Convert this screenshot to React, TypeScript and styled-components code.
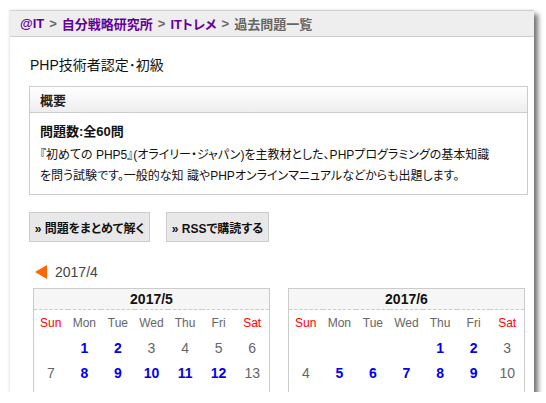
import styled, { createGlobalStyle } from "styled-components";

const Global = createGlobalStyle`
  html, body {
    margin: 0;
    padding: 0;
    background: #fff;
  }
  body {
    font-family: "Liberation Sans", "Noto Sans CJK JP", sans-serif;
    font-feature-settings: "palt";
    color: #222;
  }
`;

const Window = styled.div`
  margin: 10px 0 0 10px;
  width: 524px;
  height: 382px;
  background: #fff;
  overflow: hidden;
  box-shadow: 4px 4px 5px rgba(0, 0, 0, 0.55), -1px 0 2px rgba(0, 0, 0, 0.08);
`;

const Breadcrumb = styled.div`
  height: 25px;
  display: flex;
  align-items: center;
  gap: 5px;
  padding-left: 10px;
  background: #eeeeee;
  border-top: 1px solid #d0d0d0;
  border-bottom: 1px solid #cccccc;
  font-size: 13px;
  font-weight: bold;
  color: #666;
`;

const Crumb = styled.span<{ $link?: boolean }>`
  color: ${(p) => (p.$link ? "#660099" : "#666")};
`;

const Content = styled.div`
  padding: 18px 0 0 19px;
`;

const Title = styled.h1`
  margin: 0 0 11px 1px;
  font-size: 14px;
  font-weight: normal;
  line-height: 20px;
  color: #111;
`;

const Summary = styled.div`
  width: 497px;
  border: 1px solid #cccccc;
`;

const SummaryHead = styled.div`
  height: 25px;
  display: flex;
  align-items: center;
  padding-left: 10px;
  background: linear-gradient(#ffffff, #eeeeee);
  border-bottom: 1px solid #cccccc;
  font-size: 13px;
  font-weight: bold;
  color: #222;
`;

const SummaryBody = styled.div`
  padding: 9px 10px 7px 10px;
  font-size: 12px;
  line-height: 21px;
  color: #111;
  white-space: nowrap;
`;

const Count = styled.div`
  font-size: 13px;
  line-height: 20px;
  font-weight: bold;
  margin-bottom: 3px;
`;

const Buttons = styled.div`
  display: flex;
  gap: 16px;
  margin-top: 17px;
`;

const Button = styled.div<{ $w: number }>`
  width: ${(p) => p.$w}px;
  height: 28px;
  box-sizing: content-box;
  display: flex;
  align-items: center;
  justify-content: center;
  background: #e8e8e8;
  border: 1px solid #cccccc;
  font-size: 12px;
  font-weight: bold;
  color: #111;
  white-space: nowrap;
`;

const Prev = styled.div`
  display: flex;
  align-items: center;
  gap: 8px;
  margin: 21px 0 0 6px;
  height: 18px;
  font-size: 14px;
  color: #444;
`;

const Arrow = styled.span`
  width: 0;
  height: 0;
  border-top: 7px solid transparent;
  border-bottom: 7px solid transparent;
  border-right: 12px solid #ff6600;
`;

const Calendars = styled.div`
  display: flex;
  align-items: flex-start;
  gap: 18px;
  margin: 7px 0 0 4px;
`;

const CalBox = styled.div`
  width: 235px;
  height: 140px;
  border: 1px solid #cccccc;
`;

const Cal = styled.table`
  width: 100%;
  border-collapse: collapse;
  table-layout: fixed;
`;

const CalTitle = styled.th`
  height: 20px;
  padding: 0;
  background: #f6f6f6;
  border-bottom: 1px dashed #cccccc;
  font-size: 14px;
  font-weight: bold;
  color: #111;
`;

const DayName = styled.td<{ $weekend?: boolean }>`
  height: 25px;
  padding: 0;
  text-align: center;
  font-size: 12px;
  color: ${(p) => (p.$weekend ? "#ff0000" : "#666")};
`;

const DateCell = styled.td<{ $link?: boolean }>`
  height: 25px;
  padding: 0;
  text-align: center;
  font-size: 14px;
  font-weight: ${(p) => (p.$link ? "bold" : "normal")};
  color: ${(p) => (p.$link ? "#0000ee" : "#666")};
`;

const days = ["Sun", "Mon", "Tue", "Wed", "Thu", "Fri", "Sat"];

type Day = { n?: number; link?: boolean };

const Calendar = ({ title, weeks }: { title: string; weeks: Day[][] }) => (
  <CalBox>
    <Cal>
      <thead>
        <tr>
          <CalTitle colSpan={7}>{title}</CalTitle>
        </tr>
      </thead>
      <tbody>
        <tr>
          {days.map((d, i) => (
            <DayName key={d} $weekend={i === 0 || i === 6}>
              {d}
            </DayName>
          ))}
        </tr>
        {weeks.map((w, i) => (
          <tr key={i}>
            {w.map((d, j) => (
              <DateCell key={j} $link={d.link}>
                {d.n}
              </DateCell>
            ))}
          </tr>
        ))}
      </tbody>
    </Cal>
  </CalBox>
);

// only the weeks that show above the window's bottom edge
const build = (offset: number, count: number, links: number[], rows: number): Day[][] => {
  const cells: Day[] = [];
  for (let i = 0; i < offset; i++) cells.push({});
  for (let n = 1; n <= count; n++) cells.push({ n, link: links.includes(n) });
  while (cells.length % 7) cells.push({});
  const weeks: Day[][] = [];
  for (let i = 0; i < cells.length; i += 7) weeks.push(cells.slice(i, i + 7));
  return weeks.slice(0, rows);
};

const may = build(1, 31, [1, 2, 8, 9, 10, 11, 12], 2);
const june = build(4, 30, [1, 2, 5, 6, 7, 8, 9], 2);

export default function App() {
  return (
    <>
      <Global />
      <Window>
        <Breadcrumb>
          <Crumb $link>@IT</Crumb>
          <Crumb>&gt;</Crumb>
          <Crumb $link>自分戦略研究所</Crumb>
          <Crumb>&gt;</Crumb>
          <Crumb $link>ITトレメ</Crumb>
          <Crumb>&gt;</Crumb>
          <Crumb>過去問題一覧</Crumb>
        </Breadcrumb>
        <Content>
          <Title>PHP技術者認定･初級</Title>
          <Summary>
            <SummaryHead>概要</SummaryHead>
            <SummaryBody>
              <Count>問題数:全60問</Count>
              『初めての PHP5』(オライリー・ジャパン)を主教材とした、PHPプログラミングの基本知識
              <br />
              を問う試験です。一般的な知 識やPHPオンラインマニュアルなどからも出題します。
            </SummaryBody>
          </Summary>
          <Buttons>
            <Button $w={119}>» 問題をまとめて解く</Button>
            <Button $w={101}>» RSSで購読する</Button>
          </Buttons>
          <Prev>
            <Arrow />
            2017/4
          </Prev>
          <Calendars>
            <Calendar title="2017/5" weeks={may} />
            <Calendar title="2017/6" weeks={june} />
          </Calendars>
        </Content>
      </Window>
    </>
  );
}
